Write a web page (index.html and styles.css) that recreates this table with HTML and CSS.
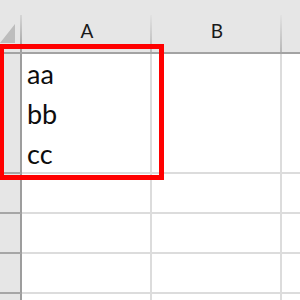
FILE: index.html
```html
<!DOCTYPE html>
<html>
<head>
<meta charset="utf-8">
<link rel="stylesheet" href="styles.css">
</head>
<body>
<div class="sheet">
  <div class="corner">
    <svg class="select-all" width="16" height="22" viewBox="0 0 16 22"><polygon points="0,21 15,21 15,2" fill="#bdbdbd"/></svg>
  </div>
  <div class="colhead">A</div>
  <div class="colhead">B</div>
  <div class="colhead last"></div>

  <div class="rowhead"></div>
  <div class="cell multi"><div class="lines"><div>aa</div><div>bb</div><div>cc</div></div></div>
  <div class="cell"></div>
  <div class="cell"></div>

  <div class="rowhead short"></div>
  <div class="cell short"></div>
  <div class="cell short"></div>
  <div class="cell short"></div>

  <div class="rowhead short"></div>
  <div class="cell short"></div>
  <div class="cell short"></div>
  <div class="cell short"></div>

  <div class="rowhead short"></div>
  <div class="cell short"></div>
  <div class="cell short"></div>
  <div class="cell short"></div>

  <div class="rowhead short"></div>
  <div class="cell short"></div>
  <div class="cell short"></div>
  <div class="cell short"></div>

  <div class="highlight"></div>
</div>
</body>
</html>
```

FILE: styles.css
```css
html, body {
  margin: 0;
  padding: 0;
  background: #ffffff;
  overflow: hidden;
}
.sheet {
  position: relative;
  width: 300px;
  height: 300px;
  overflow: hidden;
  display: grid;
  grid-template-columns: 22px 130px 130px 60px;
  grid-template-rows: 54px 120px 40px 40px 40px 40px;
  font-family: Lato, "Liberation Sans", sans-serif;
}
.corner {
  box-sizing: border-box;
  background: linear-gradient(to bottom, #d6d6d6, #9e9e9e) right 15px / 2px 37px no-repeat, #e6e6e6;
  border-bottom: 2px solid #a3a3a3;
  display: flex;
  align-items: flex-end;
}
.select-all {
  display: block;
  margin-bottom: 8px;
}
.colhead {
  box-sizing: border-box;
  background: linear-gradient(to bottom, #e2e2e2, #b8b8b8) right 15px / 2px 37px no-repeat, #e6e6e6;
  border-bottom: 2px solid #a3a3a3;
  text-align: center;
  font-size: 19px;
  line-height: 20px;
  padding-top: 21px;
  color: #1a1a1a;
}
.rowhead {
  box-sizing: border-box;
  background: #e6e6e6;
  border-right: 2px solid #9d9d9d;
  border-bottom: 2px solid #a6a6a6;
}
.cell {
  box-sizing: border-box;
  border-right: 2px solid #dcdcdc;
  border-bottom: 2px solid #dcdcdc;
}
.multi {
  display: flex;
  align-items: flex-end;
  padding-left: 5px;
  font-size: 27px;
  line-height: 40px;
  color: #0d0d0d;
}
.lines {
  margin-bottom: -2px;
}
.highlight {
  position: absolute;
  left: -1px;
  top: 44px;
  width: 165px;
  height: 136px;
  box-sizing: border-box;
  border: 5px solid #ff0000;
}
```
